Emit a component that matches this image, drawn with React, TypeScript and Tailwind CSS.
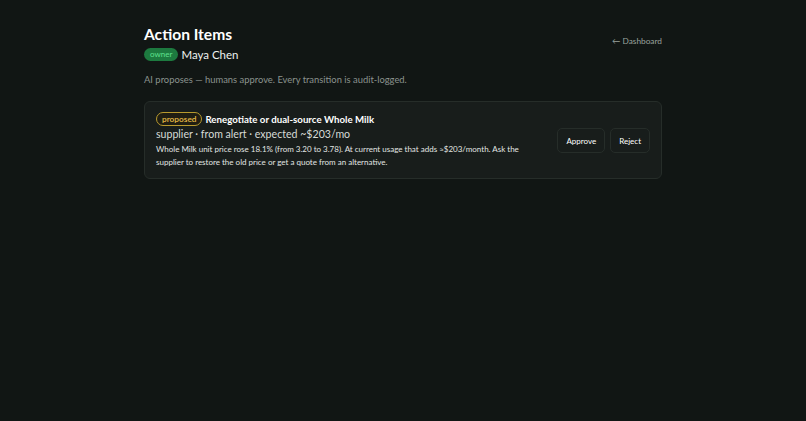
export default function App() {
  return (
    <div className="min-h-screen bg-[#111614] text-[#e8ece9] [font-family:Lato,sans-serif]">
      <div className="mx-auto w-[518px] pt-[24px]">
        <div className="flex items-start justify-between">
          <div>
            <h1 className="text-[15.6px] font-bold leading-[20px] text-white">Action Items</h1>
            <div className="mt-[4px] flex items-center gap-[3px]">
              <span className="rounded-full bg-[#1d7a3f] px-[6px] text-[8px] leading-[13px] text-[#5fe08e]">owner</span>
              <span className="text-[11.5px] leading-[13px] text-[#eef1ef]">Maya Chen</span>
            </div>
          </div>
          <a className="mt-[11px] text-[8.3px] leading-[12px] text-[#9aa39d]">← Dashboard</a>
        </div>
        <p className="mt-[12px] text-[9.4px] leading-[13px] text-[#8b938e]">
          AI proposes — humans approve. Every transition is audit-logged.
        </p>
        <div className="mt-[15px] flex items-center justify-between rounded-[6px] border border-[#262d29] bg-[#181d1b] pb-[9px] pl-[11px] pr-[11px] pt-[10px]">
          <div className="w-[370px]">
            <div className="flex items-center gap-[3px]">
              <span className="rounded-full border border-[#b89a2e] bg-[#201e12] px-[5px] text-[8.3px] font-semibold leading-[12px] text-[#e6bb45]">
                proposed
              </span>
              <span className="text-[9.7px] font-bold leading-[13px] text-white">Renegotiate or dual-source Whole Milk</span>
            </div>
            <div className="mt-[1px] text-[10.6px] leading-[14px] text-[#d6dbd8]">supplier · from alert · expected ~$203/mo</div>
            <p className="mt-[2px] text-[8px] leading-[13px] text-[#e2e6e3]">
              Whole Milk unit price rose 18.1% (from 3.20 to 3.78). At current usage that adds ≈$203/month. Ask the supplier to restore the old price or get a quote from an alternative.
            </p>
          </div>
          <div className="flex gap-[5px]">
            <button className="h-[25px] rounded-[5px] border border-[#262d29] bg-[#181d1b] px-[8px] text-[8px] text-white">Approve</button>
            <button className="h-[25px] rounded-[5px] border border-[#262d29] bg-[#181d1b] px-[8px] text-[8px] text-white">Reject</button>
          </div>
        </div>
      </div>
    </div>
  );
}
